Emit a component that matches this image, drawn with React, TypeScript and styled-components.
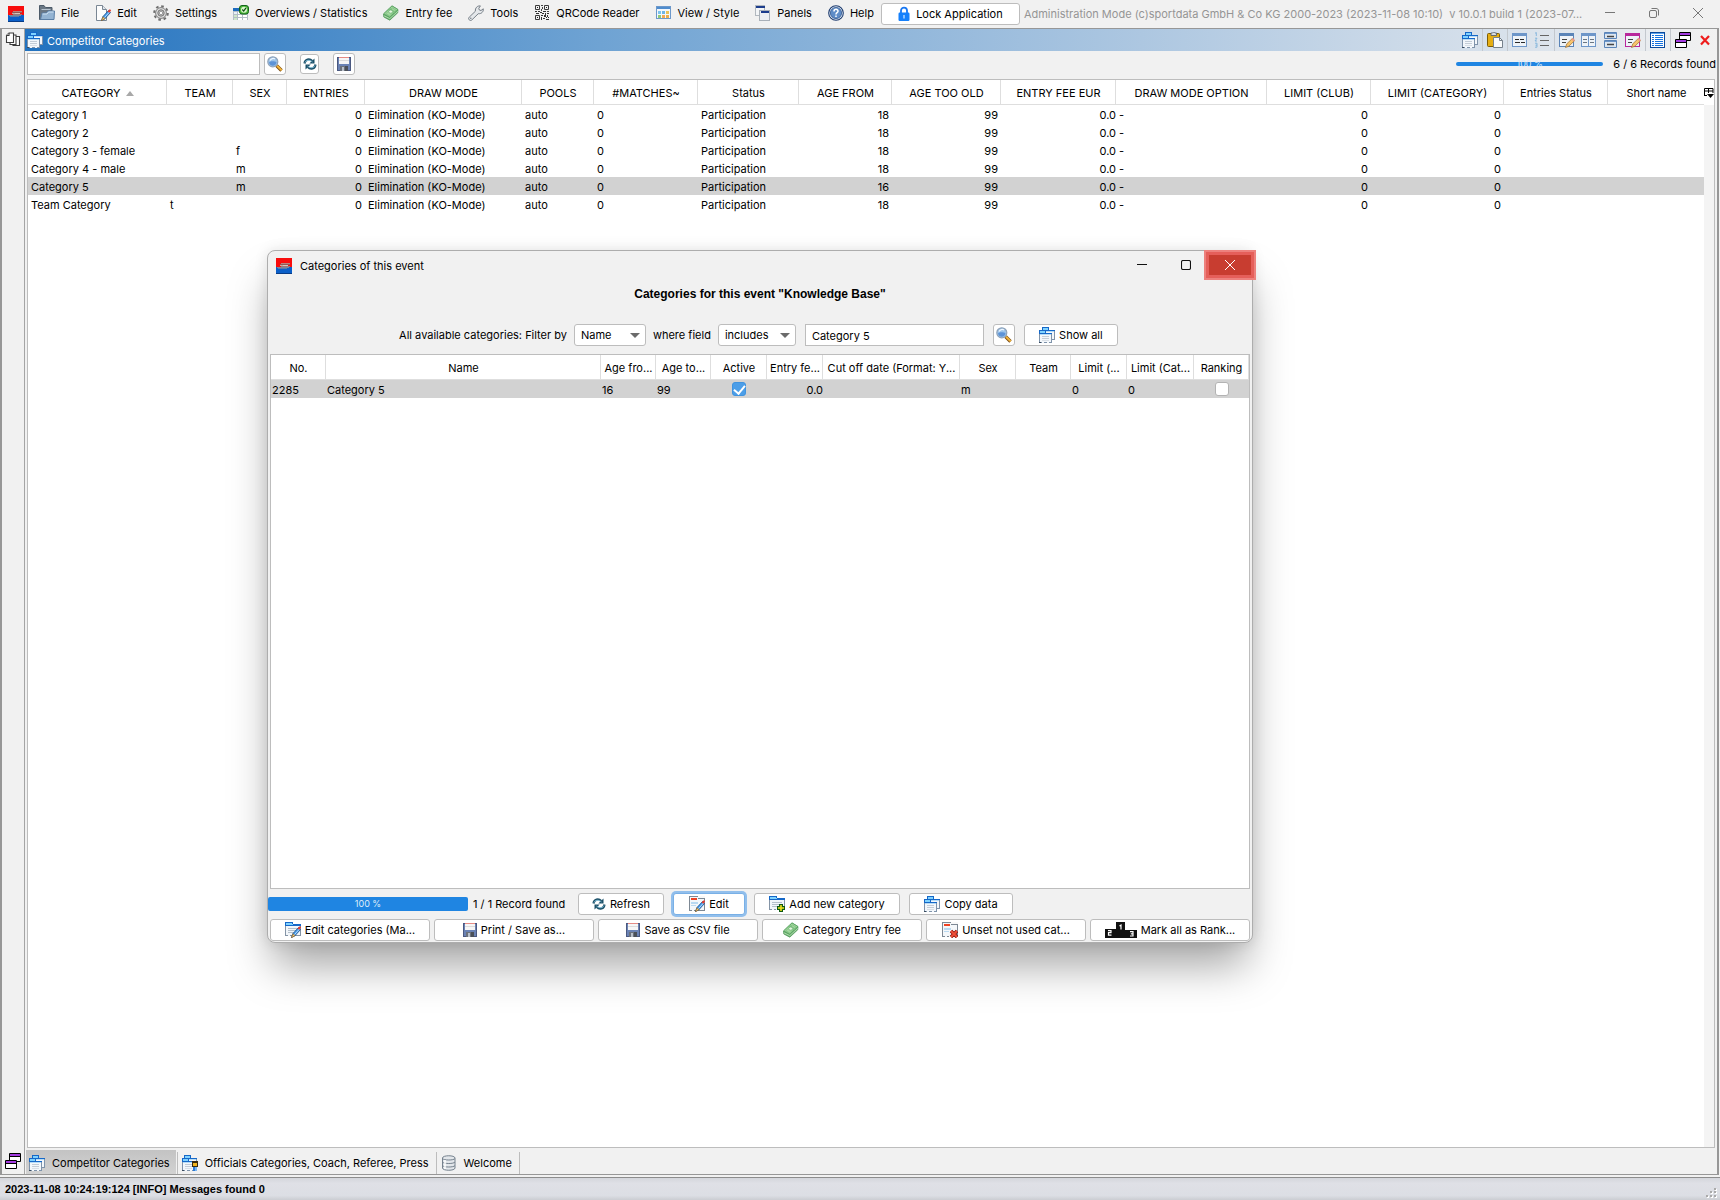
import React, { ReactNode } from "react";
import styled, { createGlobalStyle, css } from "styled-components";

const uiFont = `Inter, "Open Sans", "Noto Sans", sans-serif`;
const boldFont = `"Liberation Sans", Arial, sans-serif`;
const face = "#f1f1f1";
const line = "#bdbdbd";

const GlobalStyle = createGlobalStyle`
  * { box-sizing: border-box; }
  body { margin: 0; background: ${face}; color: #000; font: 11px/16px ${uiFont}; }
  button, input, select { font: inherit; color: inherit; margin: 0; }
  svg { display: block; flex: none; }
`;

/* ---------- icons ---------- */

type Px = [number, number, number, number, string];
const Pixels = ({ list }: { list: Px[] }) => (
  <>
    {list.map(([x, y, w, h, c], i) => (
      <rect key={i} x={x} y={y} width={w} height={h} fill={c} />
    ))}
  </>
);

const Icon = ({ children, w = 16, h = 16 }: { children: ReactNode; w?: number; h?: number }) => (
  <svg width={w} height={h} viewBox={`0 0 ${w} ${h}`} aria-hidden="true">
    {children}
  </svg>
);

const LogoIcon = () => (
  <Icon>
    <Pixels
      list={[
        [0, 0, 16, 9, "#f80d0d"], [0, 9, 16, 7, "#0b5fc8"], [0, 15, 16, 1, "#083c86"],
        [5, 5, 9, 1, "#b9847c"], [4, 6, 10, 1, "#8f5a55"], [4, 7, 3, 1, "#c9a8a0"], [7, 7, 5, 1, "#d8c4bd"],
        [5, 8, 9, 1, "#9a7a78"], [1, 9, 12, 1, "#7d8798"], [2, 10, 9, 1, "#5d7ba8"],
      ]}
    />
  </Icon>
);

const FileIcon = () => (
  <Icon>
    <path d="M.5 14.500v-14h4.500l1.500 2h6.500v12z" fill="#6a7784" stroke="#4d5b69" />
    <path d="M2.500 4.500h9" stroke="#b9c6d2" />
    <path d="M1.500 14.500 3 8h4.500l1.500-2h6.500l-.5 8.500z" fill="#94b4d3" stroke="#5b7fa6" />
    <path d="M3.500 9h4.500l1.500-2h5" stroke="#cfe2f3" fill="none" />
  </Icon>
);

const Pencil = () => (
  <>
    <path d="M6.500 15.500 8 11.500l5.500-6 2 2-5.800 6.500z" fill="#3f97e8" stroke="#1c4f8c" strokeWidth=".8" />
    <path d="M9.300 12.800 14.600 6.900" stroke="#c5e4ff" strokeWidth=".9" />
    <path d="m12.600 6.400 1.700-1.900c1.200-.3 1.900.5 1.500 1.500l-1.500 1.800z" fill="#e23b2e" />
    <path d="M6.400 15.700 8 11.700l2 2z" fill="#f3c877" stroke="#8b5a18" strokeWidth=".6" />
  </>
);

const EditIcon = () => (
  <Icon>
    <path d="M1.500 15.500V.5h6l4 4v11z" fill="#fdfdfd" stroke="#7a8794" />
    <path d="M7.500.5v4h4" fill="#dfe5eb" stroke="#7a8794" />
    <Pencil />
  </Icon>
);

const GearIcon = () => (
  <Icon>
    <circle cx="8" cy="8" r="6.800" fill="none" stroke="#6e6e6e" strokeWidth="2" strokeDasharray="2.600 2.740" />
    <circle cx="8" cy="8" r="5.400" fill="#dedede" stroke="#707070" strokeWidth=".9" />
    <circle cx="8" cy="8" r="3.200" fill="#c4c4c4" stroke="#6a6a6a" strokeWidth=".9" />
    <circle cx="8" cy="8" r="1.700" fill="#fafafa" stroke="#808080" strokeWidth=".7" />
  </Icon>
);

const OverviewIcon = () => (
  <Icon>
    <Pixels
      list={[
        [0, 3, 15, 12, "#b3bdc7"], [0, 3, 8, 3, "#1d6bbd"], [1, 7, 3, 2, "#e8f0f8"], [5, 7, 4, 2, "#fff"], [10, 8, 4, 1, "#fff"],
        [1, 10, 3, 2, "#cfe8c8"], [5, 10, 4, 2, "#fff"], [10, 10, 4, 2, "#fff"], [1, 13, 3, 2, "#cfe8c8"], [5, 13, 4, 2, "#fff"], [10, 13, 4, 2, "#fff"],
      ]}
    />
    <rect x="6.500" y=".5" width="9" height="8.500" rx="2.500" fill="#4db83b" stroke="#14631a" />
    <circle cx="11" cy="4.700" r="3" fill="#d8f5cc" />
    <path d="m9.300 4.500 1.400 1.600 2.300-3.200" fill="none" stroke="#0f4f12" strokeWidth="1.200" />
  </Icon>
);

const MoneyIcon = () => (
  <Icon>
    <path d="M.5 9 9 .8l6 3.700-.2 3.200-8 7.500L.8 12z" fill="#66ad6c" stroke="#4a9455" strokeWidth=".7" />
    <path d="M.7 8.800 9 1l5.800 3.500-8 7.600z" fill="#a5d8a0" stroke="#4c9a58" strokeWidth=".6" />
    <path d="m2.700 8.800 6.400-6 3.800 2.200-6.200 5.900z" fill="none" stroke="#74bb78" strokeWidth=".7" />
    <path d="m5.500 4.300 5.500 3.800 1.500-1.300-5.500-3.900z" fill="#7fc081" />
    <ellipse cx="7.700" cy="6.600" rx="2" ry="1.600" fill="#e4f5df" stroke="#5aa763" strokeWidth=".6" />
    <path d="m1 10.800 5.800 2.800L15 6.200" stroke="#c9eac3" strokeWidth=".7" fill="none" />
  </Icon>
);

const WrenchIcon = () => (
  <Icon>
    <path
      d="M1.200 14.800c-.9-.9-.8-1.800 0-2.600l6.200-6C7 3 9.300.5 12.400.9L10.800 3.300l.5 1.700 1.700.5 2.300-1.700c.4 3-2 5.300-5 4.900l-6.400 6.200c-.9.800-1.900.8-2.700-.1z"
      fill="#e4e7ea"
      stroke="#6b747d"
      strokeWidth=".9"
    />
    <circle cx="2.800" cy="13.200" r=".7" fill="#6b747d" />
  </Icon>
);

const QrIcon = () => (
  <Icon>
    <g fill="none" stroke="#3a3a3a">
      <path d="M1.500.5h4v4h-4zM10.500.5h4v4h-4zM1.500 10.500h4v4h-4z" />
    </g>
    <Pixels
      list={[
        [3, 2, 1, 1, "#222"], [12, 2, 1, 1, "#222"], [3, 12, 1, 1, "#222"], [7, 0, 2, 1, "#444"], [8, 2, 1, 2, "#444"], [7, 4, 1, 2, "#444"],
        [1, 6, 2, 1, "#333"], [4, 6, 2, 1, "#333"], [9, 6, 3, 1, "#333"], [13, 6, 2, 1, "#444"], [2, 8, 3, 1, "#333"], [6, 7, 2, 1, "#333"],
        [8, 8, 2, 1, "#333"], [11, 8, 1, 2, "#333"], [13, 8, 2, 1, "#333"], [7, 10, 2, 1, "#333"], [10, 10, 2, 2, "#333"], [13, 10, 1, 2, "#333"],
        [7, 12, 1, 3, "#333"], [9, 13, 2, 1, "#333"], [12, 12, 1, 1, "#333"], [12, 14, 3, 1, "#333"], [14, 12, 1, 1, "#333"],
      ]}
    />
  </Icon>
);

const ViewIcon = () => (
  <Icon>
    <rect x=".5" y="1.500" width="14" height="12" fill="#f3f7fc" stroke="#6c98ca" />
    <Pixels
      list={[
        [1, 2, 13, 2, "#4f8ccd"], [2, 6, 3, 3, "#7cc4ee"], [6, 6, 3, 3, "#6fb5e6"], [10, 6, 3, 3, "#e8c25a"],
        [2, 10, 3, 3, "#8fcb79"], [6, 10, 3, 3, "#f2ab55"], [10, 10, 3, 3, "#ecae4c"],
      ]}
    />
  </Icon>
);

const PanelsIcon = () => (
  <Icon>
    <rect x=".5" y=".5" width="9" height="10" fill="#f3f5f7" stroke="#b2b8bf" />
    <rect x="1" y="1" width="9" height="2" fill="#1d3d8c" />
    <rect x="4.500" y="5.500" width="10" height="10" fill="#eef0f2" stroke="#a9b0b8" />
    <rect x="6" y="6" width="8" height="2" fill="#1d3d8c" />
  </Icon>
);

const HelpIcon = () => (
  <Icon>
    <circle cx="8" cy="8" r="7.300" fill="#e6eef8" stroke="#1d3b6e" strokeWidth="1.100" />
    <circle cx="8" cy="8" r="5.600" fill="#5f8dc8" stroke="#34588f" strokeWidth=".8" />
    <path d="M6 6.400C6 3.600 10.200 3.800 10 6.200c-.1 1.500-2 1.400-2 3.200M8 10.600v1.500" stroke="#fff" strokeWidth="1.500" fill="none" />
  </Icon>
);

const LockIcon = () => (
  <Icon w={12}>
    <path d="M3 8V4.500C3 .6 9 .6 9 4.500V8" fill="none" stroke="#1877f2" strokeWidth="1.800" />
    <rect x=".5" y="6.500" width="11" height="8.500" rx="1.200" fill="#1580fb" />
    <rect x="5.500" y="9" width="1" height="3.500" fill="#fff" />
  </Icon>
);

const Folder = ({ x = 0, y = 0 }: { x?: number; y?: number }) => (
  <g transform={`translate(${x} ${y})`}>
    <Pixels
      list={[
        [0, 0, 7, 3, "#1668c8"], [1, 1, 5, 2, "#7fd2ff"], [0, 3, 13, 1, "#1668c8"], [0, 4, 13, 9, "#7f93aa"], [1, 4, 11, 8, "#f3f7fb"],
        [1, 4, 11, 1, "#b5dcf8"], [3, 6, 7, 1, "#c3ccd6"], [3, 8, 7, 1, "#c3ccd6"], [3, 10, 7, 1, "#d9dfe6"],
        [0, 12, 2, 1, "#3b4c5e"], [3, 12, 2, 1, "#f3f7fb"], [8, 12, 2, 1, "#f3f7fb"],
      ]}
    />
  </g>
);

const FoldersIcon = () => (
  <Icon>
    <Folder x={3} y={0} />
    <Folder x={0} y={3} />
  </Icon>
);

const WideFolder = () => (
  <Pixels
    list={[
      [0, 0, 8, 3, "#1668c8"], [1, 1, 6, 1, "#7fd2ff"], [0, 2, 16, 2, "#1668c8"], [1, 2, 7, 1, "#7fd2ff"], [0, 4, 16, 10, "#8494a6"],
      [1, 4, 14, 9, "#f2f6fa"], [3, 6, 10, 1, "#b4bfca"], [3, 8, 10, 1, "#b4bfca"], [3, 10, 6, 1, "#b4bfca"], [3, 13, 2, 1, "#f2f6fa"], [7, 13, 2, 1, "#f2f6fa"],
    ]}
  />
);

const RedForm = () => (
  <Pixels
    list={[
      [0, 0, 16, 15, "#7d8894"], [1, 1, 14, 13, "#f4f7fa"], [9, 0, 7, 2, "#f8f8f8"], [9, 2, 6, 1, "#7d8894"], [2, 2, 6, 2, "#ef4324"],
      [2, 6, 7, 2, "#b9d9f1"], [2, 9, 5, 1, "#b9d9f1"], [3, 14, 2, 1, "#f4f7fa"], [7, 14, 2, 1, "#f4f7fa"],
    ]}
  />
);

const FolderEditIcon = () => (<Icon><WideFolder /><Pencil /></Icon>);
const FormEditIcon = () => (<Icon><RedForm /><Pencil /></Icon>);
const FormDeleteIcon = () => (
  <Icon>
    <RedForm />
    <path d="m9 9 6 6m0-6-6 6" stroke="#8c1208" strokeWidth="3.400" />
    <path d="m9 9 6 6m0-6-6 6" stroke="#f0503a" strokeWidth="1.800" />
  </Icon>
);
const FolderAddIcon = () => (
  <Icon>
    <WideFolder />
    <path d="M12 8v8M8 12h8" stroke="#0d5a12" strokeWidth="4" />
    <path d="M12 9v6M9 12h6" stroke="#f2e21c" strokeWidth="1.600" />
  </Icon>
);
const OfficialIcon = () => (
  <Icon>
    <Folder x={2} y={0} />
    <Folder x={0} y={3} />
    <Pixels list={[[10, 6, 6, 6, "#3a2b10"], [11, 8, 4, 3, "#f3b51e"], [11, 12, 2, 4, "#2b7ad6"], [13, 12, 2, 4, "#7ab6f2"]]} />
  </Icon>
);

const MagnifierIcon = () => (
  <Icon>
    <path d="m9.500 9.500 5 5" stroke="#7a4a10" strokeWidth="3.400" />
    <path d="m10 9.700 4.700 4.700" stroke="#f3b53a" strokeWidth="2" />
    <circle cx="5.800" cy="5.800" r="5" fill="#9cc4ea" stroke="#8fa2b8" strokeWidth="1.200" />
    <path d="M2 6.500c1-2 6-1.500 7.500-.5.200 4-6.500 5.500-7.500.5z" fill="#5d93d6" />
    <path d="M3 4.500c1.200-2.200 3.500-2.500 5-1.400" stroke="#eef7ff" strokeWidth="1.300" fill="none" />
  </Icon>
);

const RefreshIcon = () => (
  <Icon w={14} h={14}>
    <g fill="none" stroke="#1c5068" strokeWidth="2.200">
      <path d="M1.500 6.500C2 2.200 6.500 1.200 9.300 4" />
      <path d="M12.500 7.500C12 11.800 7.500 12.800 4.700 10" />
    </g>
    <path d="M11.500 1.500v5H6.300zM2.500 12.500v-5h5.200z" fill="#1c5068" />
    <path d="M2 5.500C3 3 6.500 2.300 9.500 5M12 8.500C11 11 7.500 11.700 4.500 9" stroke="#8ccbe4" strokeWidth=".9" fill="none" />
  </Icon>
);

const SaveIcon = () => (
  <Icon w={14} h={14}>
    <Pixels
      list={[
        [0, 0, 14, 14, "#4a5880"], [1, 1, 12, 12, "#6a82b4"], [2, 0, 10, 7, "#f6f6f6"], [2, 0, 10, 1, "#e58b85"], [2, 3, 10, 1, "#dcdcdc"],
        [3, 9, 8, 5, "#6b717b"], [5, 10, 2, 4, "#b9c0ca"], [8, 9, 3, 5, "#4b5058"],
      ]}
    />
  </Icon>
);

const PodiumIcon = () => (
  <svg width="32" height="16" viewBox="0 0 32 16" aria-hidden="true">
    <path d="M0 7h11V0h9v8h12v8H0z" fill="#111" />
    <g fill="none" stroke="#fff" strokeWidth="1.200">
      <path d="M3 8.600h3v2H3.500v2.500H6.500M14.500 4l1.500-1v4.500M25 9.600h3v4.400h-3m.8-2.200H28" />
    </g>
  </svg>
);

const PagesIcon = () => (
  <Icon>
    <g fill="#fff" stroke="#3c3c3c" strokeWidth="1.100">
      <path d="M8 4.500h6.500v9H8z" />
      <path d="M5 3h6v9.500H5z" />
      <path d="M1.500 3.500 4 1h4.500v9.500h-7z" />
      <path d="M1.500 3.500H4V1" />
    </g>
  </Icon>
);

const WindowsIcon = () => (
  <Icon>
    <path d="M4.500.5h11v8h-11z" fill="#fff" stroke="#000" />
    <rect x="5" y="1" width="10" height="2" fill="#a33be0" />
    <path d="M4 3.500h12" stroke="#000" />
    <path d="M.5 7.500h11v8H.5z" fill="#fff" stroke="#000" />
    <rect x="1" y="8" width="10" height="2" fill="#a33be0" />
    <path d="M0 10.500h12" stroke="#000" />
  </Icon>
);

const ClipboardIcon = () => (
  <Icon>
    <rect x=".5" y="1.500" width="12" height="13" rx="1" fill="#e6ae12" stroke="#7d5c05" />
    <path d="M4 3.500V1h1.500c.5-1.200 2-1.200 2.500 0H9.500v2.500z" fill="#d7dbe0" stroke="#59616a" strokeWidth=".9" />
    <path d="M6.500 5.500h6l3 3v7h-9z" fill="#fafbfc" stroke="#76818c" />
    <path d="M12.500 5.500v3h3" fill="none" stroke="#76818c" />
  </Icon>
);

const Frame = ({ tone = "#5a84b8" }: { tone?: string }) => (
  <>
    <rect x=".5" y="1.500" width="14" height="13" fill="#eef3f8" stroke={tone} />
    <rect x="1" y="2" width="13" height="2" fill={tone} />
  </>
);
const FormIcon = () => (
  <Icon><Frame tone="#6d96c9" /><path d="M3 7.500h4M8 7.500h4M3 10.500h5M9 10.500h4" stroke="#2a2a2a" strokeWidth="1.200" /></Icon>
);
const ListIcon = () => (
  <Icon>
    <path d="M6 3.500h9M6 8.500h9M6 13.500h9" stroke="#666" strokeWidth="1.200" />
    <path d="M1 1.300 2.300.5v3.500M1 6.200h2l-2 2.800h2M1 11.200h2v4H1m.5-2H3" stroke="#7fb3dd" strokeWidth=".9" fill="none" />
  </Icon>
);
const FramePencil = () => (
  <>
    <path d="M3 7.500h5M3 10.500h4" stroke="#444" strokeWidth="1.200" />
    <path d="m6.500 15.500 1.300-3.700 5.500-5.300 2.200 2.200-5.600 5.500z" fill="#f8c56c" stroke="#9a6a2c" strokeWidth=".7" />
    <path d="m12.300 7.300 1.200-1.100c1.200-.2 2.200.8 2 2l-1.100 1.200z" fill="#e99a8a" />
  </>
);
const FormPencilIcon = () => (<Icon><Frame /><FramePencil /></Icon>);
const PinkPencilIcon = () => (<Icon><Frame tone="#b8289c" /><FramePencil /></Icon>);
const ColumnsIcon = () => (
  <Icon>
    <Frame tone="#6d96c9" />
    <path d="M7.500 4v10" stroke="#6d96c9" />
    <path d="M2 7.500h4M2 10.500h4M9 7.500h4M9 10.500h4" stroke="#6b7682" strokeWidth="1.200" />
  </Icon>
);
const RowsIcon = () => (
  <Icon>
    <path d="M1.500.5h12v6h-12zM1.500 8.500h12v7h-12z" fill="#dce6f0" stroke="#5a84b8" />
    <path d="M2 1.500h11M2 9.500h11" stroke="#6d96c9" />
    <path d="M4 4.500h7M4 12.500h7" stroke="#444" strokeWidth="1.400" />
  </Icon>
);
const BlueListIcon = () => (
  <Icon>
    <rect x=".5" y=".5" width="14" height="15" fill="#fff" stroke="#0c4a9c" />
    <path d="M2 3.500h2M2 5.500h2M2 7.500h2M2 9.500h2M2 11.500h2M2 13.500h2M5 3.500h8M5 5.500h8M5 7.500h8M5 9.500h8M5 11.500h8M5 13.500h8" stroke="#1673e0" />
    <path d="M1 1.500h13" stroke="#5aa4f0" />
  </Icon>
);
const RedCrossIcon = () => (
  <Icon><path d="m4 4 8 8.500M12 4l-8 8.500" stroke="#ee1c1c" strokeWidth="2.200" /></Icon>
);
const DatabaseIcon = () => (
  <Icon>
    <path d="M1.500 3v10c0 3 12.500 3 12.500 0V3c0-3-12.500-3-12.500 0z" fill="#e3e7eb" stroke="#75818d" />
    <path d="M1.500 3.500c1 2 11.500 2 12.500 0M1.500 7c1 2 11.500 2 12.500 0M1.500 10.500c1 2 11.500 2 12.500 0" fill="none" stroke="#75818d" />
    <path d="M4 5v9" stroke="#fff" strokeWidth="1.500" />
  </Icon>
);
const ColumnControlIcon = () => (
  <svg width="10" height="12" viewBox="0 0 10 12" aria-hidden="true">
    <path d="M.5 9V1.500h8.500V6M.5 4h8.500M4.500 1.500V6M.5 8.500H3" fill="none" stroke="#000" />
    <path d="M3 7h7l-3.500 4z" />
  </svg>
);
const MinimiseGlyph = () => (<Icon w={10} h={10}><path d="M0 4.500h10" stroke="currentColor" /></Icon>);
const MaximiseGlyph = () => (<Icon w={10} h={10}><rect x=".5" y=".5" width="9" height="9" rx="1.500" fill="none" stroke="currentColor" strokeWidth="1.100" /></Icon>);
const RestoreGlyph = () => (
  <Icon w={10} h={10}>
    <rect x=".5" y="2.500" width="7" height="7" rx="1.500" fill="none" stroke="currentColor" />
    <path d="M2.500.5H7c1.700 0 2.500.8 2.500 2.500v4.500" fill="none" stroke="currentColor" />
  </Icon>
);
const CloseGlyph = () => (<Icon w={10} h={10}><path d="m0 0 10 10M10 0 0 10" stroke="currentColor" /></Icon>);

/* ---------- shell ---------- */

const Shell = styled.div`
  position: relative;
  display: flex;
  flex-direction: column;
  height: 100vh;
  overflow: hidden;
`;

const MenuBar = styled.header`
  display: flex;
  align-items: center;
  height: 28px;
  flex: none;
  padding-left: 8px;
`;

const Menus = styled.nav`
  display: flex;
  gap: 16px;
  padding: 0 7px 2px 15px;
`;

const PlainButton = styled.button`
  display: flex;
  align-items: center;
  gap: 6px;
  padding: 0;
  border: 0;
  background: none;
  white-space: nowrap;
`;

const PushButton = styled.button<{ $width?: number; $height?: number; $focused?: boolean; $gap?: number }>`
  display: flex;
  align-items: center;
  justify-content: center;
  gap: ${(p) => p.$gap ?? 4}px;
  flex: none;
  width: ${(p) => p.$width ?? 22}px;
  height: ${(p) => p.$height ?? 22}px;
  padding: 0;
  border: 1px solid ${line};
  border-radius: 3px;
  background: #fff;
  white-space: nowrap;
  ${(p) =>
    p.$focused &&
    css`
      border-color: #79b0e6;
      box-shadow: 0 0 0 2px #92bfec;
    `}
`;

const AppTitle = styled.span`
  flex: 1;
  min-width: 0;
  padding-left: 4px;
  color: #959595;
  white-space: pre;
  overflow: hidden;
`;

const WindowButton = styled.button<{ $muted?: boolean }>`
  display: grid;
  place-items: center;
  width: 44px;
  height: 24px;
  padding: 0;
  border: 0;
  background: none;
  color: ${(p) => (p.$muted ? "#777" : "#111")};
`;

const WindowControls = styled.div`
  display: flex;
  flex: none;
  padding-bottom: 2px;
`;

const Workspace = styled.div`
  display: flex;
  flex: 1;
  min-height: 0;
  border: solid #979797;
  border-width: 1px 2px 1px 2px;
  margin-right: 1px;
`;

const SideStrip = styled.aside`
  display: flex;
  flex-direction: column;
  justify-content: space-between;
  align-items: center;
  flex: none;
  width: 23px;
  padding: 3px 3px 5px 3px;
  border-right: 1px solid #a5a5a5;
`;

const IconButton = styled.button`
  padding: 0;
  border: 0;
  background: none;
`;

const Panel = styled.main`
  display: flex;
  flex-direction: column;
  flex: 1;
  min-width: 0;
`;

const PanelTitle = styled.div`
  display: flex;
  align-items: center;
  gap: 4px;
  flex: none;
  height: 22px;
  padding-left: 2px;
  background: linear-gradient(90deg, #2272bf, #6fa3d3 34%, #adc7e1 66%, #d3deea 85%, ${face});
`;

const PanelName = styled.h1`
  flex: 1;
  margin: 0;
  padding-top: 2px;
  color: #fff;
  font-size: 11px;
  font-weight: 400;
`;

const ToolGroup = styled.div`
  display: flex;
  gap: 6px;
  padding: 0 4px;
  height: 22px;
  align-items: center;
  & + & { border-left: 1px solid #c3c8ce; }
`;

const ToolGroups = styled.div`
  display: flex;
`;

const Toolbar = styled.form`
  display: flex;
  align-items: center;
  gap: 14px;
  flex: none;
  height: 28px;
  padding: 0 1px 2px 2px;
  margin: 0;
`;

const SearchGroup = styled.div`
  display: flex;
  gap: 4px;
`;

const TextField = styled.input<{ $width: number }>`
  width: ${(p) => p.$width}px;
  height: 22px;
  padding: 1px 6px 0;
  border: 1px solid ${line};
  background: #fff;
`;

const RecordInfo = styled.div`
  display: flex;
  align-items: center;
  gap: 10px;
  margin-left: auto;
`;

const Bar = styled.div<{ $width: number; $height: number }>`
  display: flex;
  align-items: center;
  justify-content: center;
  flex: none;
  width: ${(p) => p.$width}px;
  height: ${(p) => p.$height}px;
  border-radius: 2px;
  background: #1f85e2;
  color: #dfecf9;
  font-size: 9px;
`;

const TableFrame = styled.div<{ $inset?: boolean }>`
  display: flex;
  flex: 1;
  min-height: 0;
  margin: ${(p) => (p.$inset ? "0 2px" : "0 2px 2px")};
  border: 1px solid ${line};
  background: #fff;
`;

const TableArea = styled.div`
  flex: 1;
  min-width: 0;
`;

const DataTable = styled.table`
  width: 100%;
  table-layout: fixed;
  border-collapse: separate;
  border-spacing: 0;
`;

const HeadCell = styled.th`
  height: 25px;
  padding: 1px 1px 0 2px;
  border-right: 1px solid #dedede;
  border-bottom: 1px solid #dedede;
  font-weight: 400;
  text-align: center;
  white-space: nowrap;
  overflow: hidden;
`;

const SortMark = styled.span`
  display: inline-block;
  margin-left: 5px;
  vertical-align: 1px;
  border: solid transparent;
  border-width: 0 4px 5px;
  border-bottom-color: #a8a8a8;
`;

const Row = styled.tr<{ $selected?: boolean }>`
  background: ${(p) => (p.$selected ? "#d2d2d2" : "#fff")};
`;

const Cell = styled.td<{ $align?: "left" | "right" | "center"; $pad?: number }>`
  height: 18px;
  padding: 2px ${(p) => p.$pad ?? 3}px 0;
  line-height: 16px;
  text-align: ${(p) => p.$align ?? "left"};
  white-space: nowrap;
  overflow: hidden;
`;

const ScrollColumn = styled.div`
  display: flex;
  flex-direction: column;
  flex: none;
  width: 10px;
`;

const ColumnControl = styled.button`
  display: grid;
  place-items: center;
  height: 25px;
  padding: 0;
  border: 0;
  background: #fff;
`;

const Track = styled.div`
  flex: 1;
  background: #f4f4f4;
`;

const Tabs = styled.nav`
  display: flex;
  flex: none;
  height: 24px;
  padding-left: 1px;
`;

const Tab = styled.button<{ $active?: boolean }>`
  display: flex;
  align-items: center;
  gap: 7px;
  padding: 1px 6px 0 3px;
  border: 0;
  background: ${(p) => (p.$active ? "linear-gradient(#c3c3c3, #d2d2d2)" : "none")};
`;

const TabDivider = styled.span`
  width: 1px;
  margin: 2px 1px 0;
  background: #bdbdbd;
`;

const StatusBar = styled.footer`
  display: flex;
  align-items: center;
  justify-content: space-between;
  flex: none;
  height: 23px;
  margin-top: 2px;
  padding: 0 2px 0 5px;
  border-top: 1px solid #8d8d8d;
  background: linear-gradient(#d4d6dc, #dfe0e6 25%, #dcdee4 80%, #cbcdd2);
  font: bold 11px/16px ${boldFont};
`;

/* ---------- dialog ---------- */

const Dialog = styled.section`
  position: absolute;
  left: 267px;
  top: 250px;
  display: flex;
  flex-direction: column;
  width: 986px;
  height: 693px;
  border: 1px solid #adadad;
  border-radius: 8px;
  background: ${face};
  box-shadow: 0 28px 44px -6px rgba(0, 0, 0, 0.36), 0 0 14px rgba(0, 0, 0, 0.1);
`;

const DialogBar = styled.div`
  display: flex;
  align-items: center;
  height: 29px;
  padding: 0 1px 0 8px;
`;

const DialogName = styled.h2`
  flex: 1;
  margin: 0;
  padding-left: 8px;
  font-size: 11px;
  font-weight: 400;
`;

const CloseButton = styled(WindowButton)`
  width: 42px;
  height: 20px;
  margin: 0 0 2px 1px;
  background: #c83d30;
  color: #fff;
  box-shadow: 0 0 0 3px #e55f5a, 0 0 0 5px #ed817d;
`;

const DialogHeading = styled.h3`
  margin: 6px 0 21px;
  font: bold 12px/17px ${boldFont};
  text-align: center;
`;

const FilterRow = styled.form`
  display: flex;
  justify-content: center;
  gap: 9px;
  margin: 0 3px 8px 0;
`;

const FilterLabel = styled.label`
  display: flex;
  align-items: center;
  gap: 7px;
`;

const FilterPair = styled.div`
  display: flex;
  gap: 7px;
`;

const SelectBox = styled.span<{ $width: number }>`
  position: relative;
  width: ${(p) => p.$width}px;
  height: 22px;
  &::after {
    content: "";
    position: absolute;
    right: 6px;
    top: 9px;
    border: solid transparent;
    border-width: 5px 5px 0;
    border-top-color: #6b6b6b;
    pointer-events: none;
  }
`;

const Select = styled.select`
  appearance: none;
  width: 100%;
  height: 22px;
  padding: 0 18px 0 6px;
  border: 1px solid ${line};
  border-radius: 3px;
  background: #fff;
`;

const CheckBox = styled.input`
  appearance: none;
  display: block;
  width: 14px;
  height: 14px;
  margin: 0 auto;
  border: 1px solid #b3b3b3;
  border-radius: 3px;
  background: #fff;
  &:checked {
    border-color: #3f93df;
    background: #4c9ee8;
  }
  &:checked::after {
    content: "";
    display: block;
    width: 5px;
    height: 9px;
    margin: 0 auto;
    border: solid #fff;
    border-width: 0 2px 2px 0;
    transform: rotate(40deg);
  }
`;

const CheckCell = styled(Cell)`
  padding-top: 0;
`;

const ActionRow = styled.div`
  display: flex;
  align-items: center;
  gap: 9px;
  height: 30px;
`;

const FoundText = styled.span`
  width: 101px;
  margin: 0 -5px 0 -4px;
  white-space: nowrap;
`;

const WideRow = styled.div`
  display: grid;
  grid-template-columns: repeat(6, 1fr);
  gap: 4px;
  padding: 0 2px 1px;
`;

const WideButton = styled(PushButton)`
  width: auto;
`;

/* ---------- data ---------- */

const menus: [string, () => React.JSX.Element][] = [
  ["File", FileIcon],
  ["Edit", EditIcon],
  ["Settings", GearIcon],
  ["Overviews / Statistics", OverviewIcon],
  ["Entry fee", MoneyIcon],
  ["Tools", WrenchIcon],
  ["QRCode Reader", QrIcon],
  ["View / Style", ViewIcon],
  ["Panels", PanelsIcon],
  ["Help", HelpIcon],
];

const toolGroups: [string, () => React.JSX.Element][][] = [
  [["Categories", FoldersIcon]],
  [["Paste", ClipboardIcon]],
  [["Form", FormIcon], ["Numbered list", ListIcon]],
  [["Edit form", FormPencilIcon], ["Columns", ColumnsIcon], ["Rows", RowsIcon], ["Edit style", PinkPencilIcon]],
  [["Table", BlueListIcon]],
  [["Float", WindowsIcon], ["Close panel", RedCrossIcon]],
];

type Align = "left" | "right" | "center";
const columns: { name: string; width: number; align?: Align; pad?: number }[] = [
  { name: "CATEGORY", width: 139 },
  { name: "TEAM", width: 66 },
  { name: "SEX", width: 54 },
  { name: "ENTRIES", width: 78, align: "right" },
  { name: "DRAW MODE", width: 157 },
  { name: "POOLS", width: 72 },
  { name: "#MATCHES~", width: 104 },
  { name: "Status", width: 101 },
  { name: "AGE FROM", width: 93, align: "right" },
  { name: "AGE TOO OLD", width: 109, align: "right" },
  { name: "ENTRY FEE EUR", width: 115, align: "right", pad: 0 },
  { name: "DRAW MODE OPTION", width: 151 },
  { name: "LIMIT (CLUB)", width: 104, align: "right" },
  { name: "LIMIT (CATEGORY)", width: 133, align: "right" },
  { name: "Entries Status", width: 104 },
  { name: "Short name", width: 97 },
];

const categories = [
  { name: "Category 1", team: "", sex: "", from: "18" },
  { name: "Category 2", team: "", sex: "", from: "18" },
  { name: "Category 3 - female", team: "", sex: "f", from: "18" },
  { name: "Category 4 - male", team: "", sex: "m", from: "18" },
  { name: "Category 5", team: "", sex: "m", from: "16", selected: true },
  { name: "Team Category", team: "t", sex: "", from: "18" },
];

const eventColumns: [string, number][] = [
  ["No.", 55], ["Name", 275], ["Age fro...", 55], ["Age to...", 55], ["Active", 56], ["Entry fe...", 56],
  ["Cut off date (Format: Y...", 137], ["Sex", 56], ["Team", 55], ["Limit (...", 56], ["Limit (Cat...", 67], ["Ranking", 55],
];

const wideActions: [string, () => React.JSX.Element][] = [
  ["Edit categories (Ma...", FolderEditIcon],
  ["Print / Save as...", SaveIcon],
  ["Save as CSV file", SaveIcon],
  ["Category Entry fee", MoneyIcon],
  ["Unset not used cat...", FormDeleteIcon],
  ["Mark all as Rank...", PodiumIcon],
];

const CategoryTable = () => (
  <DataTable>
    <colgroup>
      {columns.map((c) => <col key={c.name} width={c.width} />)}
    </colgroup>
    <thead>
      <tr>
        {columns.map((c, i) => (
          <HeadCell key={c.name} scope="col">
            {c.name}
            {i === 0 && <SortMark />}
          </HeadCell>
        ))}
      </tr>
    </thead>
    <tbody>
      {categories.map((r) => {
        const values = [r.name, r.team, r.sex, "0", "Elimination (KO-Mode)", "auto", "0", "Participation", r.from, "99", "0.0", "-", "0", "0", "", ""];
        return (
          <Row key={r.name} $selected={r.selected}>
            {values.map((v, i) => (
              <Cell key={i} $align={columns[i].align} $pad={columns[i].pad}>{v}</Cell>
            ))}
          </Row>
        );
      })}
    </tbody>
  </DataTable>
);

const EventDialog = () => (
  <Dialog role="dialog" aria-labelledby="dialog-name">
    <DialogBar>
      <LogoIcon />
      <DialogName id="dialog-name">Categories of this event</DialogName>
      <WindowControls>
        <WindowButton type="button" aria-label="Minimise dialog"><MinimiseGlyph /></WindowButton>
        <WindowButton type="button" aria-label="Maximise dialog"><MaximiseGlyph /></WindowButton>
      </WindowControls>
      <CloseButton type="button" aria-label="Close dialog"><CloseGlyph /></CloseButton>
    </DialogBar>
    <DialogHeading>Categories for this event "Knowledge Base"</DialogHeading>
    <FilterRow onSubmit={(e) => e.preventDefault()}>
      <FilterPair>
        <FilterLabel>
          All available categories: Filter by
          <SelectBox $width={72}>
            <Select defaultValue="Name"><option>Name</option></Select>
          </SelectBox>
        </FilterLabel>
        <FilterLabel>
          where field
          <SelectBox $width={78}>
            <Select defaultValue="includes"><option>includes</option></Select>
          </SelectBox>
        </FilterLabel>
      </FilterPair>
      <TextField $width={179} type="text" defaultValue="Category 5" aria-label="Filter value" />
      <PushButton type="submit" aria-label="Filter"><MagnifierIcon /></PushButton>
      <PushButton type="button" $width={94}><FoldersIcon />Show all</PushButton>
    </FilterRow>
    <TableFrame $inset>
      <TableArea>
        <DataTable>
          <colgroup>
            {eventColumns.map(([name, width]) => <col key={name} width={width} />)}
          </colgroup>
          <thead>
            <tr>{eventColumns.map(([name]) => <HeadCell key={name} scope="col">{name}</HeadCell>)}</tr>
          </thead>
          <tbody>
            <Row $selected>
              <Cell $pad={1}>2285</Cell>
              <Cell $pad={1}>Category 5</Cell>
              <Cell $pad={1}>16</Cell>
              <Cell $pad={1}>99</Cell>
              <CheckCell $align="center"><CheckBox type="checkbox" defaultChecked aria-label="Active" /></CheckCell>
              <Cell $align="right" $pad={0}>0.0</Cell>
              <Cell />
              <Cell $pad={1}>m</Cell>
              <Cell />
              <Cell $pad={1}>0</Cell>
              <Cell $pad={1}>0</Cell>
              <CheckCell $align="center"><CheckBox type="checkbox" aria-label="Ranking" /></CheckCell>
            </Row>
          </tbody>
        </DataTable>
      </TableArea>
    </TableFrame>
    <ActionRow>
      <Bar $width={200} $height={14}>100 %</Bar>
      <FoundText>1 / 1 Record found</FoundText>
      <PushButton type="button" $width={86}><RefreshIcon />Refresh</PushButton>
      <PushButton type="button" $width={72} $focused><FormEditIcon />Edit</PushButton>
      <PushButton type="button" $width={146}><FolderAddIcon />Add new category</PushButton>
      <PushButton type="button" $width={104}><FoldersIcon />Copy data</PushButton>
    </ActionRow>
    <WideRow>
      {wideActions.map(([name, Glyph]) => (
        <WideButton key={name} type="button"><Glyph />{name}</WideButton>
      ))}
    </WideRow>
  </Dialog>
);

export default function App() {
  return (
    <Shell>
      <GlobalStyle />
      <MenuBar>
        <LogoIcon />
        <Menus>
          {menus.map(([name, Glyph]) => (
            <PlainButton key={name} type="button"><Glyph />{name}</PlainButton>
          ))}
        </Menus>
        <PushButton type="button" $width={139} $gap={6}><LockIcon />Lock Application</PushButton>
        <AppTitle>{"Administration Mode (c)sportdata GmbH & Co KG 2000-2023 (2023-11-08 10:10)  v 10.0.1 build 1 (2023-07..."}</AppTitle>
        <WindowControls>
          <WindowButton $muted type="button" aria-label="Minimise"><MinimiseGlyph /></WindowButton>
          <WindowButton $muted type="button" aria-label="Restore"><RestoreGlyph /></WindowButton>
          <WindowButton $muted type="button" aria-label="Close"><CloseGlyph /></WindowButton>
        </WindowControls>
      </MenuBar>
      <Workspace>
        <SideStrip>
          <IconButton type="button" aria-label="Pages"><PagesIcon /></IconButton>
          <IconButton type="button" aria-label="Windows"><WindowsIcon /></IconButton>
        </SideStrip>
        <Panel>
          <PanelTitle>
            <FoldersIcon />
            <PanelName>Competitor Categories</PanelName>
            <ToolGroups>
              {toolGroups.map((group, i) => (
                <ToolGroup key={i}>
                  {group.map(([name, Glyph]) => (
                    <IconButton key={name} type="button" aria-label={name}><Glyph /></IconButton>
                  ))}
                </ToolGroup>
              ))}
            </ToolGroups>
          </PanelTitle>
          <Toolbar onSubmit={(e) => e.preventDefault()}>
            <SearchGroup>
              <TextField $width={233} type="text" aria-label="Search categories" />
              <PushButton type="submit" aria-label="Search"><MagnifierIcon /></PushButton>
            </SearchGroup>
            <PushButton type="button" $width={19} $height={20} aria-label="Refresh list"><RefreshIcon /></PushButton>
            <PushButton type="button" aria-label="Save list"><SaveIcon /></PushButton>
            <RecordInfo>
              <Bar $width={147} $height={4}>100 %</Bar>
              6 / 6 Records found
            </RecordInfo>
          </Toolbar>
          <TableFrame>
            <TableArea><CategoryTable /></TableArea>
            <ScrollColumn>
              <ColumnControl type="button" aria-label="Choose columns"><ColumnControlIcon /></ColumnControl>
              <Track />
            </ScrollColumn>
          </TableFrame>
          <Tabs>
            <Tab type="button" $active><FoldersIcon />Competitor Categories</Tab>
            <TabDivider />
            <Tab type="button"><OfficialIcon />Officials Categories, Coach, Referee, Press</Tab>
            <TabDivider />
            <Tab type="button"><DatabaseIcon />Welcome</Tab>
            <TabDivider />
          </Tabs>
        </Panel>
      </Workspace>
      <StatusBar>
        2023-11-08 10:24:19:124 [INFO] Messages found 0
        <svg width="12" height="22" viewBox="0 0 12 22" aria-hidden="true">
          <path d="M9 11h2v2H9zM5 14h2v2H5zM9 14h2v2H9zM1 18h2v2H1zM5 18h2v2H5zM9 18h2v2H9z" fill="#fff" />
          <path d="M8 10h2v2H8zM4 13h2v2H4zM8 13h2v2H8zM0 17h2v2H0zM4 17h2v2H4zM8 17h2v2H8z" fill="#aaa" />
        </svg>
      </StatusBar>
      <EventDialog />
    </Shell>
  );
}
